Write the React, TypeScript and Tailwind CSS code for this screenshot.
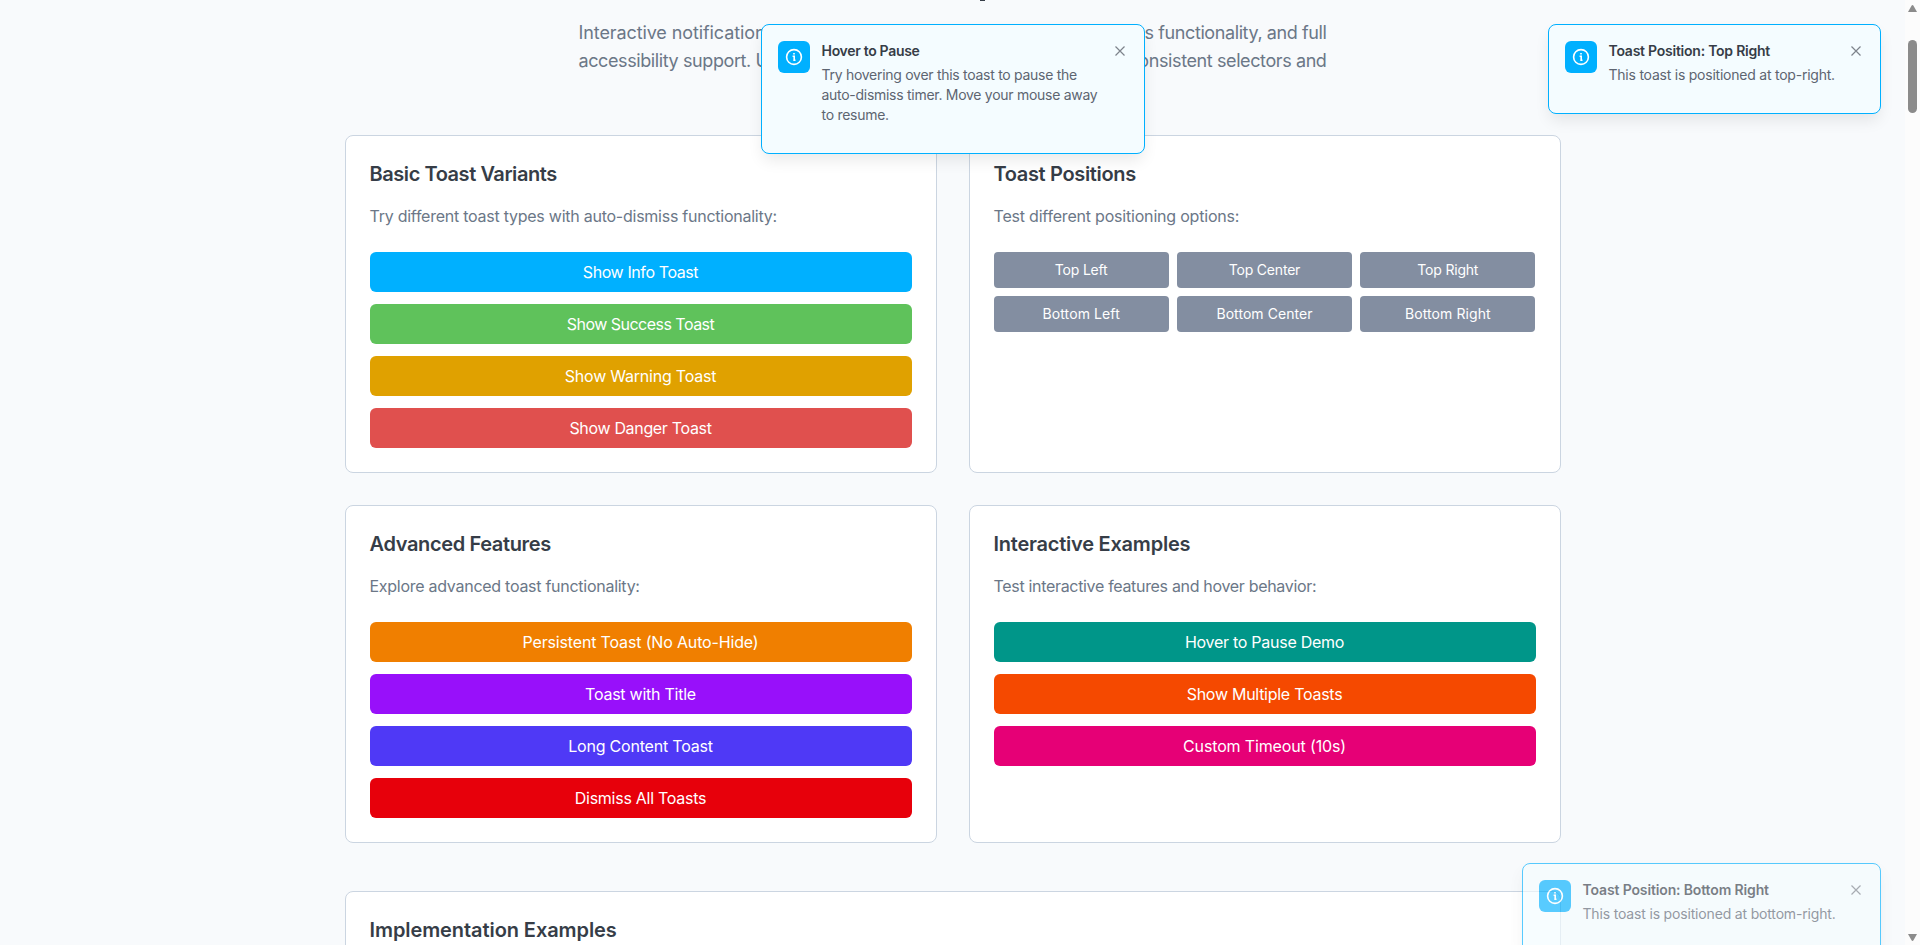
import type { ReactNode } from "react";

function Button({ color, track, children }: { color: string; track: string; children: string }) {
  return (
    <button className={`flex h-10 w-full items-center justify-center rounded-md text-base text-white ${color} ${track}`}>
      {children}
    </button>
  );
}

function PositionButton({ children, track }: { children: string; track: string }) {
  return (
    <button className={`flex h-9 items-center justify-center rounded bg-[#838ea1] text-sm text-white ${track}`}>
      {children}
    </button>
  );
}

type CardProps = { title: string; titleTrack: string; text: string; textTrack: string; children: ReactNode };

function Card({ title, titleTrack, text, textTrack, children }: CardProps) {
  return (
    <section className="rounded-lg border border-[#cbd5e1] bg-white p-6">
      <h3 className={`mb-4 text-xl font-semibold text-[#363d47] ${titleTrack}`}>{title}</h3>
      <p className={`mb-6 text-base text-[#6b7787] ${textTrack}`}>{text}</p>
      {children}
    </section>
  );
}

type ToastProps = { title: string; titleTrack: string; textTrack: string; children: ReactNode; className: string };

function Toast({ title, titleTrack, textTrack, children, className }: ToastProps) {
  return (
    <div className={`flex items-start rounded-lg border border-[#00b0ff] bg-[#f4fcff] p-4 pb-7 shadow-[0_8px_16px_-2px_rgba(0,0,0,0.09)] ${className}`}>
      <div className="flex size-8 shrink-0 items-center justify-center rounded-md bg-[#00b0ff]">
        <svg width="18" height="18" viewBox="0 0 18 18" fill="none" stroke="white" strokeWidth="1.6">
          <circle cx="9" cy="9" r="7.4" />
          <path d="M7.6 8.2H9.2V12.4M8.3 12.3H10.5" />
          <path d="M9 5V6.6" />
        </svg>
      </div>
      <div className="ml-[11.5px] flex-1 text-sm">
        <div className={`font-semibold text-[#363d47] ${titleTrack}`}>{title}</div>
        <div className={`mt-1 text-[#5d6571] ${textTrack}`}>{children}</div>
      </div>
      <svg className="mt-[5px] mr-[3px] shrink-0" width="10" height="10" viewBox="0 0 10 10" fill="none" stroke="#7d838b" strokeWidth="1.2">
        <path d="M0.5 0.5L9.5 9.5M9.5 0.5L0.5 9.5" />
      </svg>
    </div>
  );
}

export default function App() {
  return (
    <div className="relative flex h-[945px] w-full overflow-hidden bg-[#f8fafc] font-['Inter',sans-serif]">
      <main className="flex-1">
        <div className="mx-auto w-[1216px]">
          <header className="mx-auto h-[135px] w-[748px] text-lg leading-7 tracking-[-0.4px] text-[#6b7787]">
            <div className="mb-[18px] ml-[401px] h-px w-[5px] bg-[#363d47]" />
            <p className="flex justify-between">
              <span className="tracking-[-0.1px]">Interactive notifications</span>
              <span>dismiss functionality, and full</span>
            </p>
            <p className="flex justify-between">
              <span>accessibility support. Use</span>
              <span>consistent selectors and</span>
            </p>
          </header>
          <div className="grid grid-cols-2 gap-8">
            <Card title="Basic Toast Variants" titleTrack="tracking-[-0.44px]" text="Try different toast types with auto-dismiss functionality:" textTrack="tracking-[-0.25px]">
              <div className="flex flex-col gap-3">
                <Button color="bg-[#00b0ff]" track="tracking-[-0.4px]">Show Info Toast</Button>
                <Button color="bg-[#5fc25b]" track="tracking-[-0.52px]">Show Success Toast</Button>
                <Button color="bg-[#e0a100]" track="tracking-[-0.22px]">Show Warning Toast</Button>
                <Button color="bg-[#e0504e]" track="tracking-[-0.33px]">Show Danger Toast</Button>
              </div>
            </Card>
            <Card title="Toast Positions" titleTrack="tracking-[-0.34px]" text="Test different positioning options:" textTrack="tracking-[-0.2px]">
              <div className="grid grid-cols-3 gap-2">
                <PositionButton track="tracking-[-0.2px]">Top Left</PositionButton>
                <PositionButton track="tracking-[-0.2px]">Top Center</PositionButton>
                <PositionButton track="tracking-[-0.2px]">Top Right</PositionButton>
                <PositionButton track="tracking-[0.1px]">Bottom Left</PositionButton>
                <PositionButton track="tracking-[0.05px]">Bottom Center</PositionButton>
                <PositionButton track="tracking-[0.1px]">Bottom Right</PositionButton>
              </div>
            </Card>
            <Card title="Advanced Features" titleTrack="tracking-[-0.36px]" text="Explore advanced toast functionality:" textTrack="tracking-[-0.27px]">
              <div className="flex flex-col gap-3">
                <Button color="bg-[#f07f00]" track="tracking-[-0.16px]">Persistent Toast (No Auto-Hide)</Button>
                <Button color="bg-[#9810fa]" track="tracking-[-0.25px]">Toast with Title</Button>
                <Button color="bg-[#4f39f6]" track="tracking-[-0.2px]">Long Content Toast</Button>
                <Button color="bg-[#e7000b]" track="tracking-[-0.27px]">Dismiss All Toasts</Button>
              </div>
            </Card>
            <Card title="Interactive Examples" titleTrack="tracking-[-0.23px]" text="Test interactive features and hover behavior:" textTrack="tracking-[-0.32px]">
              <div className="flex flex-col gap-3">
                <Button color="bg-[#009689]" track="tracking-[-0.27px]">Hover to Pause Demo</Button>
                <Button color="bg-[#f54900]" track="tracking-[-0.27px]">Show Multiple Toasts</Button>
                <Button color="bg-[#e60076]" track="tracking-[-0.15px]">Custom Timeout (10s)</Button>
              </div>
            </Card>
          </div>
          <section className="mt-12 h-40 rounded-lg border border-[#cbd5e1] bg-white p-6">
            <h3 className="text-xl font-semibold tracking-[-0.08px] text-[#363d47]">Implementation Examples</h3>
          </section>
        </div>
      </main>
      <aside className="flex w-[15px] flex-col items-center bg-[#fcfcfc]">
        <svg width="15" height="40" viewBox="0 0 15 40" fill="#8b8b8b"><path d="M3 12L6.5 5.8Q7.5 4.4 8.5 5.8L12 12Z" /></svg>
        <div className="h-[73px] w-[9px] rounded-full bg-[#8b8b8b]" />
        <svg className="mt-auto" width="15" height="15" viewBox="0 0 15 15" fill="#8b8b8b"><path d="M3 4L6.5 10.2Q7.5 11.6 8.5 10.2L12 4Z" /></svg>
      </aside>
      <Toast title="Hover to Pause" titleTrack="tracking-[-0.31px]" textTrack="tracking-[-0.28px]" className="absolute top-6 left-[761px] w-96">
        Try hovering over this toast to pause the
        <br />
        auto-dismiss timer. Move your mouse away
        <br />
        to resume.
      </Toast>
      <Toast title="Toast Position: Top Right" titleTrack="tracking-[-0.24px]" textTrack="tracking-[-0.23px]" className="absolute top-6 left-[1548px] w-[333px]">
        This toast is positioned at top-right.
      </Toast>
      <Toast title="Toast Position: Bottom Right" titleTrack="tracking-[-0.14px]" textTrack="tracking-[-0.17px]" className="absolute top-[863px] left-[1522px] w-[359px] opacity-65">
        This toast is positioned at bottom-right.
      </Toast>
    </div>
  );
}
